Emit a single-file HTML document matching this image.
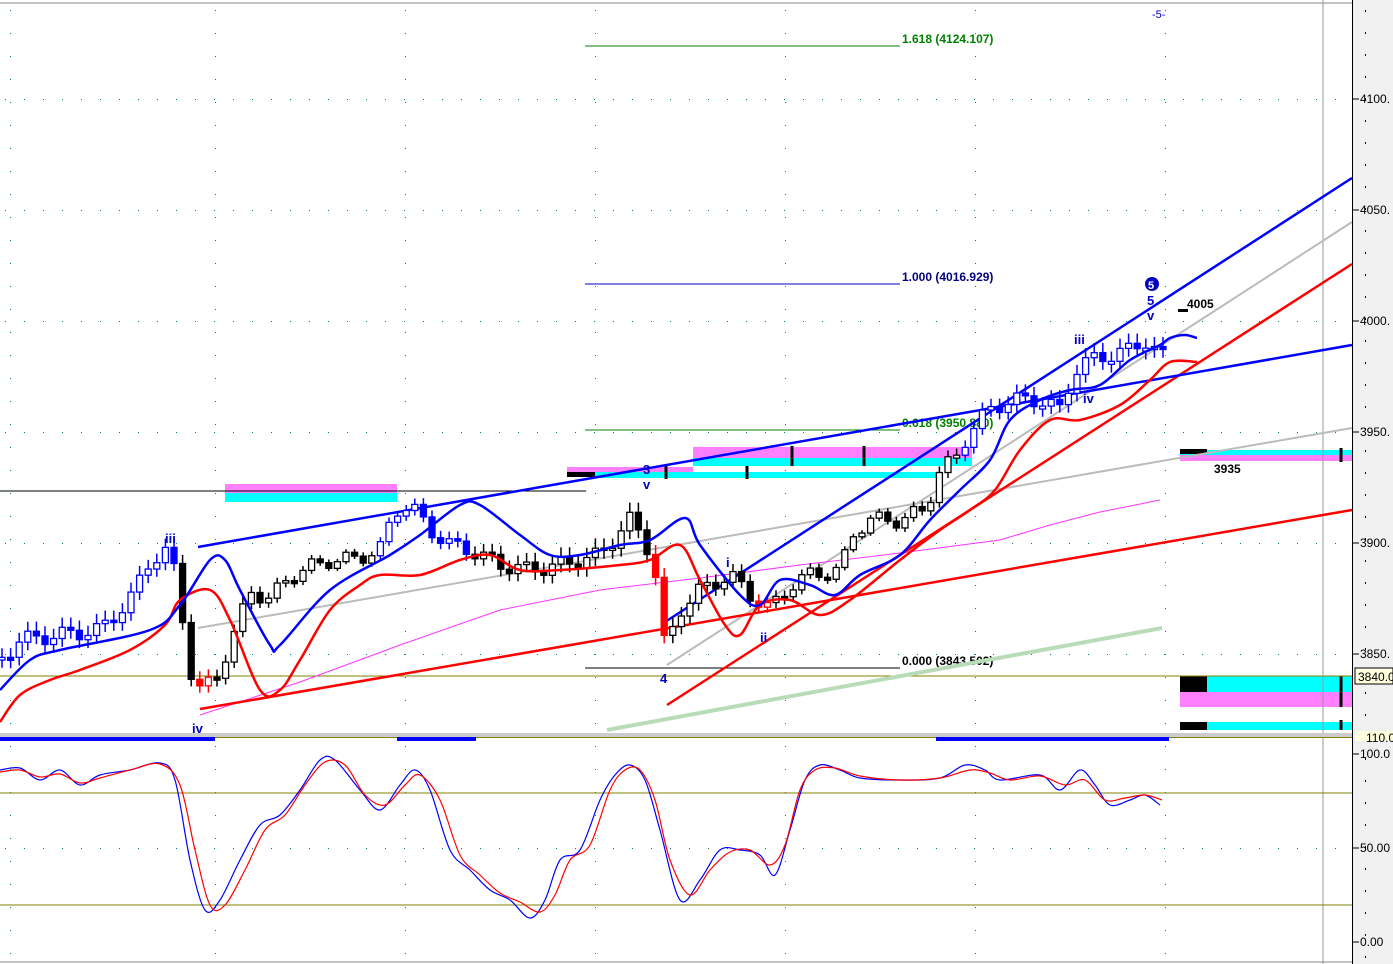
<!DOCTYPE html>
<html><head><meta charset="utf-8"><style>
html,body{margin:0;padding:0;background:#fff;width:1393px;height:964px;overflow:hidden}
svg{display:block;font-family:"Liberation Sans",Arial,sans-serif}
</style></head><body>
<svg id="s" width="1393" height="964" viewBox="0 0 1393 964" xmlns="http://www.w3.org/2000/svg">
<rect width="1393" height="964" fill="#fff"/>
<g id="grid"></g>
<line x1="0" y1="3" x2="1352" y2="3" fill="none" stroke="#888" stroke-width="1"/>
<rect x="225" y="484" width="172" height="9" fill="#ff80ff"/>
<rect x="225" y="493" width="172" height="9" fill="#00ffff"/>
<rect x="567" y="467" width="126" height="5" fill="#ff80ff"/>
<rect x="567" y="472" width="28" height="5" fill="#000"/>
<rect x="595" y="472" width="345" height="6" fill="#00ffff"/>
<rect x="693" y="447" width="279" height="11" fill="#ff80ff"/>
<rect x="693" y="458" width="279" height="8" fill="#00ffff"/>
<rect x="1180" y="450" width="172" height="5" fill="#00ffff"/>
<rect x="1180" y="449" width="27" height="5" fill="#000"/>
<rect x="1180" y="455" width="172" height="6" fill="#ff80ff"/>
<rect x="1180" y="676" width="172" height="16" fill="#00ffff"/>
<rect x="1180" y="676" width="27" height="16" fill="#000"/>
<rect x="1180" y="692" width="172" height="15" fill="#ff80ff"/>
<rect x="1180" y="722" width="172" height="8" fill="#00ffff"/>
<rect x="1180" y="722" width="27" height="8" fill="#000"/>
<rect x="1178" y="309" width="10" height="3" fill="#000"/>
<g stroke="#000" stroke-width="3">
<line x1="666" y1="466" x2="666" y2="479"/><line x1="747" y1="466" x2="747" y2="479"/>
<line x1="792" y1="446" x2="792" y2="466"/><line x1="864" y1="446" x2="864" y2="466"/>
<line x1="1341" y1="448" x2="1341" y2="462"/><line x1="1341" y1="676" x2="1341" y2="707"/><line x1="1341" y1="720" x2="1341" y2="730"/>
</g>
<line x1="585" y1="46" x2="900" y2="46" stroke="#008000"/>
<line x1="585" y1="430" x2="900" y2="430" stroke="#008000"/>
<line x1="585" y1="284" x2="900" y2="284" stroke="#0000c0"/>
<line x1="585" y1="668" x2="900" y2="668" stroke="#000"/>
<line x1="0" y1="491" x2="586" y2="491" stroke="#000"/>
<line x1="0" y1="676" x2="1352" y2="676" stroke="#808000"/>
<line x1="1323" y1="0" x2="1323" y2="964" stroke="#999"/>
<g font-size="12" font-weight="bold">
<text x="902" y="43" fill="#008000">1.618 (4124.107)</text>
<text x="902" y="281" fill="#000080">1.000 (4016.929)</text>
<text x="902" y="427" fill="#008000">0.618 (3950.880)</text>
<text x="902" y="665" fill="#000">0.000 (3843.502)</text>
<text x="1187" y="308" fill="#000">4005</text>
<text x="1214" y="473" fill="#000">3935</text>
</g>
<polyline points="607,730 1162,628" fill="none" stroke="#b8dcb8" stroke-width="4"/>
<polyline points="198,628 1352,428" fill="none" stroke="#bbb" stroke-width="2"/>
<polyline points="667,665 1352,222" fill="none" stroke="#bbb" stroke-width="2"/>
<polyline points="200,715 300,682 400,645 500,610 600,590 700,578 800,565 900,553 1000,540 1050,525 1100,512 1160,500" fill="none" stroke="#ff33ff" stroke-width="1"/>
<polyline points="200,709 1352,510" fill="none" stroke="#f00" stroke-width="2.5"/>
<polyline points="667,705 1352,264" fill="none" stroke="#f00" stroke-width="2.5"/>
<polyline points="198,547 1352,345" fill="none" stroke="#0000ff" stroke-width="2.5"/>
<polyline points="665,622 1352,178" fill="none" stroke="#0000ff" stroke-width="2.5"/>
<g id="candles"></g>
<path id="redma" fill="none" stroke="#f00" stroke-width="2.5" stroke-linejoin="round"/>
<path id="bluma" fill="none" stroke="#0000ff" stroke-width="2.5" stroke-linejoin="round"/>
<g font-size="13" font-weight="bold" fill="#0000c0">
<text x="165" y="543">iii</text><text x="192" y="733">iv</text>
<text x="643" y="474">3</text><text x="643" y="489">v</text>
<text x="660" y="683">4</text>
<text x="726" y="567">i</text><text x="760" y="642">ii</text>
<text x="1074" y="344">iii</text><text x="1083" y="403">iv</text>
<text x="1147" y="305">5</text><text x="1147" y="320">v</text>
<text x="1152" y="18" font-weight="normal" font-size="11">-5-</text>
</g>
<circle cx="1152" cy="284" r="7" fill="#0000c0"/><text x="1148" y="289" font-size="11" font-weight="bold" fill="#fff">5</text>
<rect x="0" y="733" width="1352" height="4" fill="#ccc"/>
<line x1="0" y1="737.5" x2="1352" y2="737.5" stroke="#808000"/>
<g fill="#0000ff"><rect x="0" y="737" width="215" height="4"/><rect x="397" y="737" width="79" height="4"/><rect x="936" y="737" width="233" height="4"/></g>
<line x1="0" y1="793" x2="1352" y2="793" stroke="#808000"/>
<line x1="0" y1="905" x2="1352" y2="905" stroke="#808000"/>
<line x1="0" y1="962" x2="1352" y2="962" stroke="#888"/>
<path id="osb" fill="none" stroke="#0000ff" stroke-width="1.2"/>
<path id="osr" fill="none" stroke="#f00" stroke-width="1.2"/>
<rect x="1352" y="0" width="41" height="964" fill="#f0f0f0"/>
<line x1="1352.5" y1="0" x2="1352.5" y2="964" stroke="#000"/>
<g id="axis" font-size="12" fill="#000"></g>
<rect x="1355" y="668" width="38" height="16" fill="#ffffe0" stroke="#000"/>
<text x="1358" y="681" font-size="12">3840.0</text>
<rect x="1355" y="731" width="38" height="10" fill="#ffffe0"/>
<text x="1366" y="742" font-size="12">110.0</text>
</svg>
<script>
var NS="http://www.w3.org/2000/svg";
function el(p,t,a){var e=document.createElementNS(NS,t);for(var k in a)e.setAttribute(k,a[k]);p.appendChild(e);return e;}
function smooth(p){var d="M"+p[0][0]+","+p[0][1];for(var i=0;i<p.length-1;i++){var p0=p[i-1]||p[i],p1=p[i],p2=p[i+1],p3=p[i+2]||p2;
d+=" C"+(p1[0]+(p2[0]-p0[0])/6)+","+(p1[1]+(p2[1]-p0[1])/6)+" "+(p2[0]-(p3[0]-p1[0])/6)+","+(p2[1]-(p3[1]-p1[1])/6)+" "+p2[0]+","+p2[1];}return d;}
function P(s){return s.trim().split(/\s+/).map(function(a){return a.split(',').map(Number);});}
document.getElementById('redma').setAttribute('d',smooth(P("0,722 20,695 50,680 80,670 130,650 165,625 180,600 210,590 230,620 260,690 280,690 300,660 330,610 360,585 380,575 420,575 460,560 490,555 520,570 560,570 620,565 650,560 680,545 700,580 725,625 740,635 760,605 790,600 820,615 850,600 900,560 940,530 970,510 995,490 1020,450 1050,420 1080,420 1120,405 1150,380 1170,362 1197,362")));
document.getElementById('bluma').setAttribute('d',smooth(P("0,690 30,660 60,650 150,630 180,605 210,560 225,560 240,590 270,645 280,645 330,590 390,555 420,535 460,505 480,505 520,535 550,555 580,555 620,545 650,540 685,518 700,545 740,595 760,605 780,580 810,585 835,595 860,575 900,555 930,520 960,490 990,460 1010,420 1040,400 1070,390 1100,385 1130,360 1160,345 1170,338 1185,335 1197,338")));
document.getElementById('osb').setAttribute('d',smooth(P("0,770 20,768 40,780 60,770 80,785 100,775 130,770 160,763 175,780 190,860 205,910 220,900 240,860 260,825 280,815 300,790 320,760 335,760 360,790 380,810 400,785 415,770 430,790 450,850 470,870 490,890 510,900 530,918 545,900 560,860 580,850 600,800 615,775 630,765 645,780 660,830 680,900 700,880 720,850 740,850 760,855 775,875 790,830 805,780 820,765 840,770 860,778 900,780 940,778 965,765 985,770 1000,780 1040,775 1060,790 1080,770 1095,785 1110,805 1130,800 1145,795 1160,805")));
document.getElementById('osr').setAttribute('d',smooth(P("0,772 20,770 40,777 60,774 80,783 100,778 130,770 160,764 180,785 195,850 210,905 225,905 245,870 265,830 285,815 305,785 325,762 345,765 365,795 385,805 405,785 420,775 440,800 460,855 480,875 500,893 520,902 540,912 555,895 570,860 590,845 610,790 625,770 640,770 655,800 670,860 690,895 710,870 730,852 750,850 770,865 785,845 800,790 815,770 835,768 860,776 900,780 940,778 970,770 990,773 1010,780 1040,776 1065,785 1085,780 1105,800 1125,798 1145,795 1162,800")));
var g=document.getElementById('grid');
[99,210,321,432,543,654,848].forEach(function(y){for(var x=5;x<1340;x+=19)el(g,'rect',{x:x,y:y,width:1,height:1,fill:'#008080'});});
[10,215,405,595,785,975,1165].forEach(function(x){for(var y=10;y<960;y+=23)el(g,'rect',{x:x,y:y,width:1,height:1,fill:'#008080'});});
var pts=P("0,660 20,640 60,635 100,630 130,600 150,560 170,550 180,600 190,670 200,690 215,680 240,620 250,590 270,600 290,575 330,560 350,560 380,550 395,510 410,505 430,530 450,545 470,550 500,565 530,570 560,565 600,555 630,520 645,540 657,580 665,650 680,610 700,590 730,575 750,595 770,610 790,585 810,575 840,570 855,530 870,520 900,520 925,510 940,470 955,460 970,430 990,410 1010,400 1040,400 1060,410 1075,370 1090,360 1110,355 1130,350 1145,340 1160,355");
function f(x){for(var i=1;i<pts.length;i++)if(x<=pts[i][0]){var a=pts[i-1],b=pts[i];return a[1]+(b[1]-a[1])*(x-a[0])/(b[0]-a[0]);}return 355;}
var c=document.getElementById('candles'),prev=f(0);
for(var x=2;x<1165;x+=8.6){var n=Math.sin(x*3.1)*8;var y=f(x)+n,col='#000';
if(x<180||(x>380&&x<470)||x>960)col='#0000ff';if((x>192&&x<210)||(x>652&&x<668)||(x>758&&x<768))col='#f00';
var t=Math.min(prev,y),b=Math.max(prev,y);if(b-t<2){b=t+3;}var up=y<prev;
var w=Math.abs(Math.sin(x*7.3))*10+4;
el(c,'line',{x1:x,y1:t-w*0.7,x2:x,y2:b+w*0.6,stroke:col,'stroke-width':1.5});
el(c,'rect',{x:x-3,y:t,width:6,height:b-t,fill:up?'#fff':col,stroke:col,'stroke-width':1.3});
prev=y;}
var ax=document.getElementById('axis');
[[99,'4100.'],[210,'4050.'],[321,'4000.'],[432,'3950.'],[543,'3900.'],[654,'3850.'],[754,'100.0'],[848,'50.00'],[942,'0.00']].forEach(function(a){
el(ax,'line',{x1:1353,y1:a[0],x2:1359,y2:a[0],stroke:'#000'});var t=el(ax,'text',{x:1360,y:a[0]+4});t.textContent=a[1];});
for(var y=10;y<964;y+=22)el(ax,'rect',{x:1365,y:y,width:1,height:2,fill:'#000'});
</script>
</body></html>
